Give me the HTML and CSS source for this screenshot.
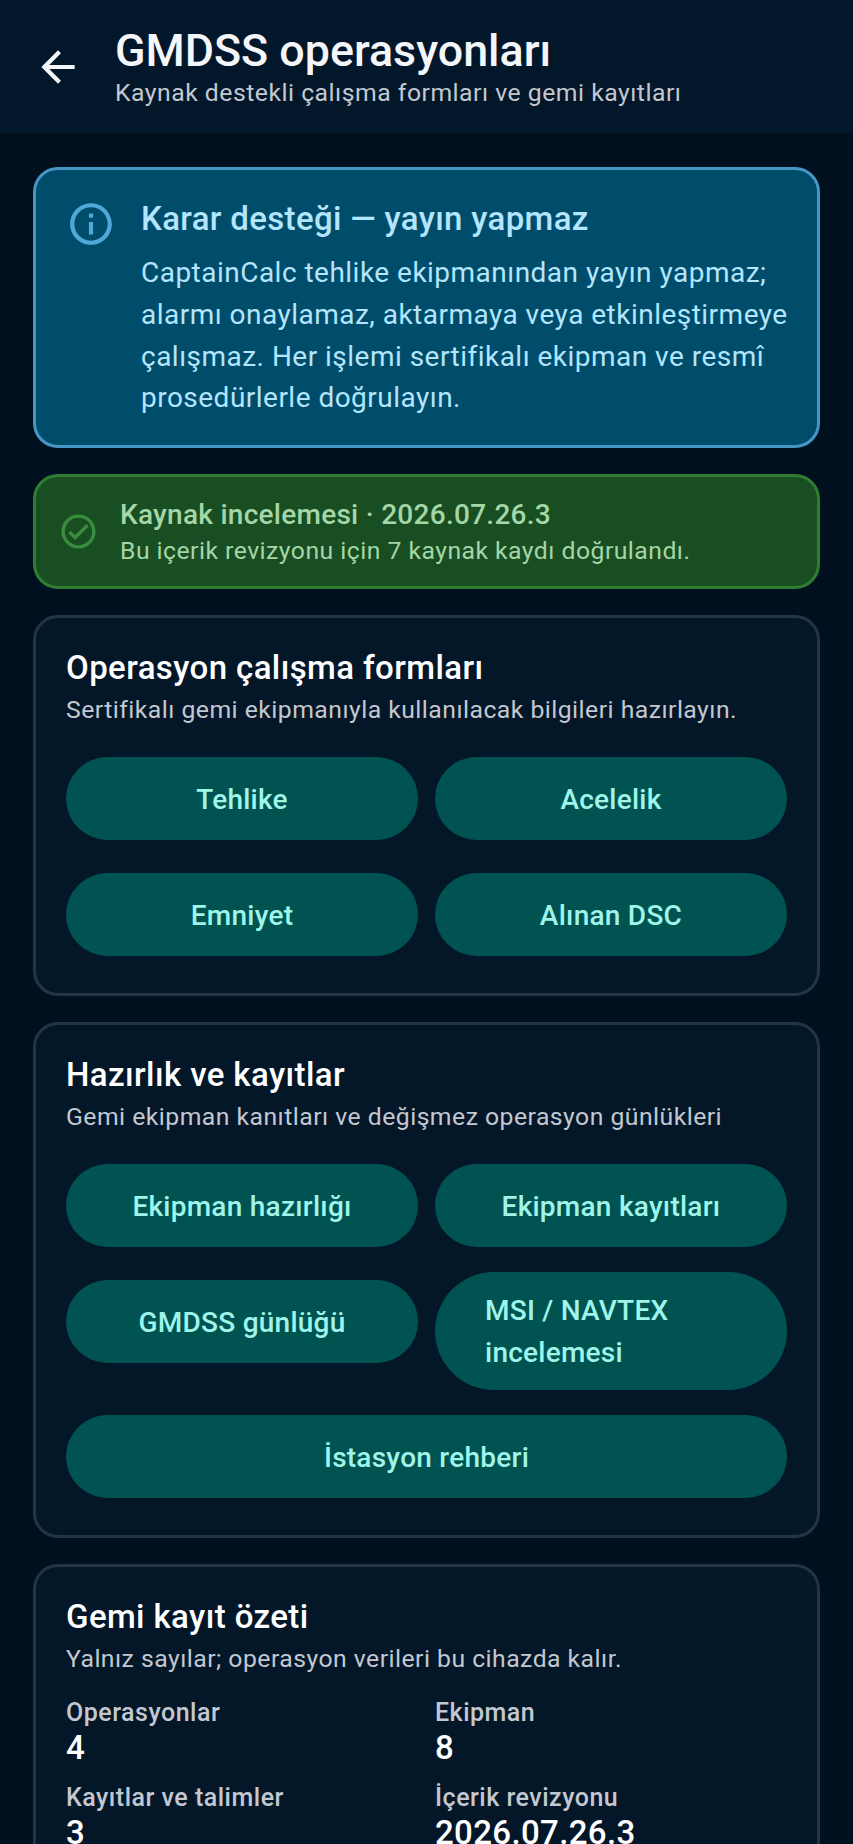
FILE: index.html
```html
<!DOCTYPE html>
<html lang="tr">
<head>
<meta charset="utf-8">
<title>GMDSS operasyonları</title>
<link rel="stylesheet" href="styles.css">
</head>
<body>
<header class="appbar">
  <svg class="back" viewBox="0 0 24 24"><path d="M20 11H7.83l5.59-5.59L12 4l-8 8 8 8 1.41-1.41L7.83 13H20v-2z"/></svg>
  <div class="appbar-text">
    <h1>GMDSS operasyonları</h1>
    <p>Kaynak destekli çalışma formları ve gemi kayıtları</p>
  </div>
</header>
<main class="content">
  <section class="info">
    <svg class="info-icon" viewBox="0 0 24 24"><path d="M11 7h2v2h-2zm0 4h2v6h-2zm1-9C6.48 2 2 6.48 2 12s4.48 10 10 10 10-4.48 10-10S17.52 2 12 2zm0 18c-4.41 0-8-3.59-8-8s3.59-8 8-8 8 3.59 8 8-3.59 8-8 8z"/></svg>
    <div>
      <h2>Karar desteği — yayın yapmaz</h2>
      <p>CaptainCalc tehlike ekipmanından yayın yapmaz; alarmı onaylamaz, aktarmaya veya etkinleştirmeye çalışmaz. Her işlemi sertifikalı ekipman ve resmî prosedürlerle doğrulayın.</p>
    </div>
  </section>
  <section class="review">
    <svg class="review-icon" viewBox="0 0 24 24"><path d="M12 2C6.48 2 2 6.48 2 12s4.48 10 10 10 10-4.48 10-10S17.52 2 12 2zm0 18c-4.41 0-8-3.59-8-8s3.59-8 8-8 8 3.59 8 8-3.59 8-8 8zm4.59-12.42L10 14.17l-2.59-2.58L6 13l4 4 8-8z"/></svg>
    <div>
      <h2>Kaynak incelemesi · 2026.07.26.3</h2>
      <p>Bu içerik revizyonu için 7 kaynak kaydı doğrulandı.</p>
    </div>
  </section>
  <section class="panel">
    <h2>Operasyon çalışma formları</h2>
    <p class="sub">Sertifikalı gemi ekipmanıyla kullanılacak bilgileri hazırlayın.</p>
    <div class="actions">
      <button class="btn">Tehlike</button>
      <button class="btn">Acelelik</button>
      <button class="btn">Emniyet</button>
      <button class="btn">Alınan DSC</button>
    </div>
  </section>
  <section class="panel">
    <h2>Hazırlık ve kayıtlar</h2>
    <p class="sub">Gemi ekipman kanıtları ve değişmez operasyon günlükleri</p>
    <div class="actions">
      <button class="btn">Ekipman hazırlığı</button>
      <button class="btn">Ekipman kayıtları</button>
      <button class="btn">GMDSS günlüğü</button>
      <button class="btn btn-tall">MSI / NAVTEX incelemesi</button>
      <button class="btn btn-wide">İstasyon rehberi</button>
    </div>
  </section>
  <section class="panel">
    <h2>Gemi kayıt özeti</h2>
    <p class="sub">Yalnız sayılar; operasyon verileri bu cihazda kalır.</p>
    <dl class="stats">
      <div><dt>Operasyonlar</dt><dd>4</dd></div>
      <div><dt>Ekipman</dt><dd>8</dd></div>
      <div><dt>Kayıtlar ve talimler</dt><dd>3</dd></div>
      <div><dt>İçerik revizyonu</dt><dd>2026.07.26.3</dd></div>
    </dl>
  </section>
</main>
</body>
</html>
```
FILE: styles.css
```css
* { box-sizing: border-box; }
html, body { margin: 0; padding: 0; }
body {
  width: 853px;
  height: 1844px;
  overflow: hidden;
  background: #01101f;
  font-family: Roboto, "Noto Sans", sans-serif;
  color: #fff;
}
h1, h2, p, dl, dd, dt { margin: 0; }

.appbar {
  height: 133px;
  display: flex;
  align-items: center;
  gap: 32px;
  padding: 0 0 0 33px;
  background: #03172a;
}
.back { width: 50px; height: 50px; fill: #f4f6fa; flex: none; }
.appbar-text { margin-top: 1px; }
.appbar h1 { font-size: 44.8px; line-height: 52px; font-weight: 500; color: #f4f6fa; }
.appbar p { font-size: 24.75px; line-height: 32px; letter-spacing: 0.5px; color: #c3c8d0; }

.content {
  display: flex;
  flex-direction: column;
  gap: 26px;
  padding: 34px 33px 0;
}

.info {
  height: 281px;
  display: flex;
  gap: 25px;
  padding: 28px 20px 24px 30px;
  border: 3px solid #4596c4;
  border-radius: 25px;
  background: #004d6b;
  color: #b3e5fc;
}
.info-icon { width: 50px; height: 50px; fill: #4fa8d8; flex: none; margin: 1px 0 0 0; }
.info h2 { font-size: 33px; line-height: 42px; font-weight: 500; letter-spacing: 0.33px; }
.info p { font-size: 28px; line-height: 41.8px; letter-spacing: 0.48px; margin-top: 12px; }

.review {
  height: 115px;
  display: flex;
  align-items: center;
  gap: 21px;
  padding: 0 20px 0 22px;
  border: 3px solid #2e7d32;
  border-radius: 25px;
  background: #184e22;
  color: #a5d6a7;
}
.review-icon { width: 41px; height: 41px; fill: #388e3c; flex: none; }
.review h2 { font-size: 28px; line-height: 38px; font-weight: 500; letter-spacing: 0.27px; }
.review p { font-size: 24.75px; line-height: 34px; letter-spacing: 0.47px; }

.panel {
  padding: 29px 30px 29px;
  border: 3px solid #243446;
  border-radius: 25px;
  background: #041729;
}
.panel h2 { font-size: 33px; line-height: 42px; font-weight: 500; letter-spacing: 0.4px; color: #fff; }
.sub { font-size: 24.75px; line-height: 34px; letter-spacing: 0.47px; margin-top: 4px; color: #c3c8d0; }

.actions {
  display: grid;
  grid-template-columns: 1fr 1fr;
  column-gap: 17px;
  row-gap: 17px;
  align-items: start;
  margin-top: 22px;
}
.btn {
  height: 83px;
  margin: 8px 0;
  padding: 9px 50px 7px;
  border: 0;
  border-radius: 42px;
  background: #005350;
  color: #9ff5ea;
  font: 500 28px/42px Roboto, "Noto Sans", sans-serif;
  letter-spacing: 0.25px;
}
.btn-tall { height: 118px; margin: 0; padding: 18px 50px 16px; text-align: left; border-radius: 59px; }
.btn-wide { grid-column: 1 / -1; }

.stats {
  display: grid;
  grid-template-columns: 1fr 1fr;
  column-gap: 17px;
  row-gap: 15px;
  margin-top: 22px;
}
.stats dt { font-size: 25px; line-height: 30px; font-weight: 500; letter-spacing: 0.5px; color: #c3c8d0; }
.stats dd { font-size: 33px; line-height: 40px; font-weight: 500; letter-spacing: 0.35px; color: #fff; }
```
